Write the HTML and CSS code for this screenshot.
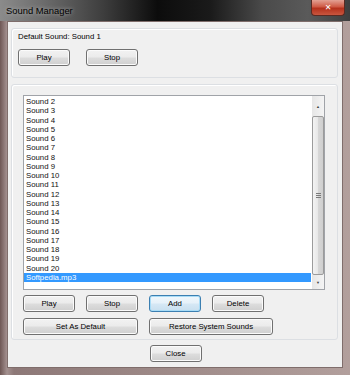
FILE: index.html
```html
<!DOCTYPE html>
<html lang="en">
  <head>
    <meta charset="UTF-8" />
    <title>Sound Manager</title>
    <link rel="stylesheet" href="styles.css">
  </head>
  <body>
    <div class="window">
      <div class="titlebar">
        <span class="title">Sound Manager</span>
        <div class="close-x">&#x2715;</div>
      </div>

      <div class="client">
        <div class="group group-top">
          <p class="default-label">Default Sound: Sound 1</p>
          <div class="row">
            <button class="btn">Play</button>
            <button class="btn">Stop</button>
          </div>
        </div>

        <div class="group group-list">
          <div class="listbox">
            <ul class="items">
              <li>Sound 2</li>
              <li>Sound 3</li>
              <li>Sound 4</li>
              <li>Sound 5</li>
              <li>Sound 6</li>
              <li>Sound 7</li>
              <li>Sound 8</li>
              <li>Sound 9</li>
              <li>Sound 10</li>
              <li>Sound 11</li>
              <li>Sound 12</li>
              <li>Sound 13</li>
              <li>Sound 14</li>
              <li>Sound 15</li>
              <li>Sound 16</li>
              <li>Sound 17</li>
              <li>Sound 18</li>
              <li>Sound 19</li>
              <li>Sound 20</li>
              <li class="selected">Softpedia.mp3</li>
            </ul>
            <div class="scrollbar">
              <div class="arrow">&#9650;</div>
              <div class="thumb"><span class="grip"></span></div>
              <div class="arrow">&#9660;</div>
            </div>
          </div>

          <div class="row row-actions">
            <button class="btn">Play</button>
            <button class="btn">Stop</button>
            <button class="btn focused">Add</button>
            <button class="btn">Delete</button>
          </div>
          <div class="row">
            <button class="btn btn-wide">Set As Default</button>
            <button class="btn btn-restore">Restore System Sounds</button>
          </div>
        </div>

        <div class="footer">
          <button class="btn">Close</button>
        </div>
      </div>
    </div>
  </body>
</html>
```

FILE: styles.css
```css
* {
  box-sizing: border-box;
  margin: 0;
  padding: 0;
}

body {
  width: 350px;
  height: 375px;
  overflow: hidden;
  font-family: "Liberation Sans", Arial, sans-serif;
  font-size: 7.8px;
  color: #000;
}

.window {
  width: 350px;
  height: 375px;
  background: linear-gradient(90deg, #6e5755 0%, #a49190 2%, #8d7877 4%, #b29f9c 100%);
  display: flex;
  flex-direction: column;
  padding: 0 7px 7px;
}

.titlebar {
  height: 21px;
  margin: 0 -7px;
  padding-left: 6px;
  display: flex;
  align-items: center;
  position: relative;
  background: linear-gradient(90deg, #8b8b8b 0%, #6d6d6d 12%, #3c3c3c 30%, #0c0c0c 45%, #1a1a1a 60%, #4a4a4a 75%, #5a5a5a 88%, #3e3e3e 100%);
}

.title {
  font-size: 9.4px;
  color: #000;
  text-shadow: 0 0 4px #bdbdbd;
}

.close-x {
  position: absolute;
  top: 0;
  right: 5px;
  width: 34px;
  height: 16px;
  border: 1px solid #5a2a22;
  border-top: none;
  border-radius: 0 0 4px 4px;
  background: linear-gradient(180deg, #e3a193 0%, #cf5a45 45%, #b5311c 55%, #c8563f 100%);
  color: #fff;
  font-family: "DejaVu Sans", sans-serif;
  font-size: 8px;
  font-weight: bold;
  display: flex;
  align-items: center;
  justify-content: center;
}

.client {
  flex: 1;
  background: #f0f0f0;
  border: 1px solid #7f6d6b;
  padding: 6px 4px 0 3px;
}

.group {
  border: 1px solid #dcdfe3;
  border-radius: 3px;
  box-shadow: inset 1px 1px 0 #fff;
}

.group-top {
  height: 50px;
  padding: 4px 0 0 6px;
}

.default-label {
  height: 16px;
  line-height: 8px;
}

.row {
  display: flex;
  gap: 11px;
}

.btn {
  width: 52px;
  height: 17px;
  font-family: inherit;
  font-size: 7.8px;
  color: #000;
  border: 1px solid #707070;
  border-radius: 3px;
  background: linear-gradient(180deg, #f2f2f2 0%, #ebebeb 48%, #dddddd 52%, #cfcfcf 100%);
  box-shadow: inset 0 0 0 1px #fbfbfb;
}

.group-top .row {
  gap: 16px;
}

.focused {
  border-color: #3c7fb1;
  box-shadow: inset 0 0 0 1px #a8dcf7;
  background: linear-gradient(180deg, #f0f7fc 0%, #e6f1f9 48%, #d6e8f5 52%, #c8dfef 100%);
}

.btn-wide {
  width: 115px;
}

.btn-restore {
  width: 124px;
}

.group-list {
  margin-top: 6px;
  height: 256px;
  padding: 10px 0 0 11px;
}

.listbox {
  width: 302px;
  height: 195px;
  border: 1px solid #a0a3a8;
  background: #fff;
  display: flex;
  padding: 1px 0 0 0;
}

.items {
  flex: 1;
  list-style: none;
  line-height: 9.25px;
}

.items li {
  height: 9.25px;
  padding-left: 2px;
  color: #111;
}

.items .selected {
  background: #3399ff;
  color: #fff;
  margin-right: 1px;
}

.scrollbar {
  width: 12px;
  margin-top: -1px;
  background: linear-gradient(90deg, #e6e6e6, #f4f4f4);
  display: flex;
  flex-direction: column;
}

.arrow {
  height: 20px;
  font-size: 4px;
  color: #444;
  display: flex;
  align-items: center;
  justify-content: center;
}

.arrow:last-child {
  height: 14px;
}

.thumb {
  flex: 1;
  border: 1px solid #9b9b9b;
  border-radius: 2px;
  background: linear-gradient(90deg, #f3f3f3 0%, #e8e8e8 45%, #d6d6d6 55%, #cfcfcf 100%);
  display: flex;
  align-items: center;
  justify-content: center;
}

.grip {
  width: 5px;
  height: 5px;
  background: repeating-linear-gradient(180deg, #7a7a7a 0 1px, transparent 1px 2px);
}

.row-actions {
  margin-top: 5px;
  margin-bottom: 6px;
}

.footer {
  display: flex;
  justify-content: center;
  padding: 5px 0 0 2px;
}
```
